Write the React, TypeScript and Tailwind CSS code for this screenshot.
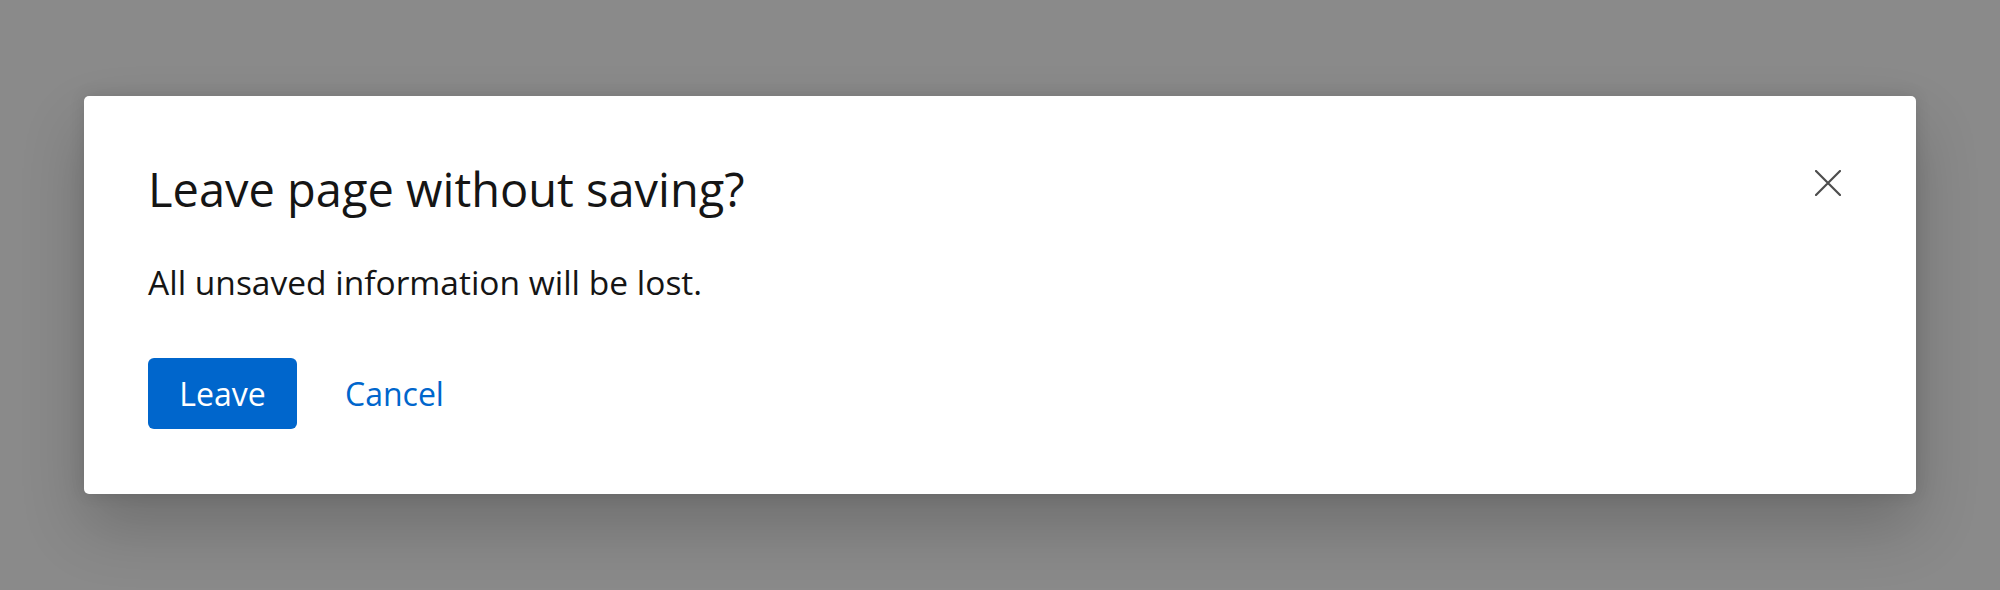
import React from "react";

export default function App() {
  return (
    <div className="h-[590px] w-full overflow-hidden bg-[#8a8a8a] pt-[96px] font-['Open_Sans',sans-serif]">
      <div className="mx-[84px] flex h-[398px] flex-col rounded-[5px] bg-white px-[64px] pt-[62px] pb-[64px] shadow-[0_32px_64px_0_rgba(3,3,3,0.2),0_0_16px_0_rgba(3,3,3,0.12)]">
        <div className="flex items-start">
          <h1 className="flex-1 text-[47px] leading-[62px] font-normal text-[#151515]">
            Leave page without saving?
          </h1>
          <button
            type="button"
            aria-label="Close"
            className="mt-[1px] flex h-[48px] w-[48px] items-center justify-center"
          >
            <svg width="26" height="26" viewBox="0 0 26 26" fill="none">
              <path d="M1 1L25 25M25 1L1 25" stroke="#4d4d4d" strokeWidth="2.2" strokeLinecap="round" />
            </svg>
          </button>
        </div>
        <p className="mt-[37px] text-[33.5px] leading-[50px] text-[#151515]">
          All unsaved information will be lost.
        </p>
        <div className="mt-[51px] flex items-center gap-[16px]">
          <button
            type="button"
            className="flex h-[71px] w-[149px] items-center justify-center rounded-[6px] bg-[#0066cc] text-[32px] leading-[48px] text-white"
          >
            Leave
          </button>
          <button
            type="button"
            className="flex h-[71px] items-center justify-center px-[32px] text-[32px] leading-[48px] text-[#0066cc]"
          >
            Cancel
          </button>
        </div>
      </div>
    </div>
  );
}
